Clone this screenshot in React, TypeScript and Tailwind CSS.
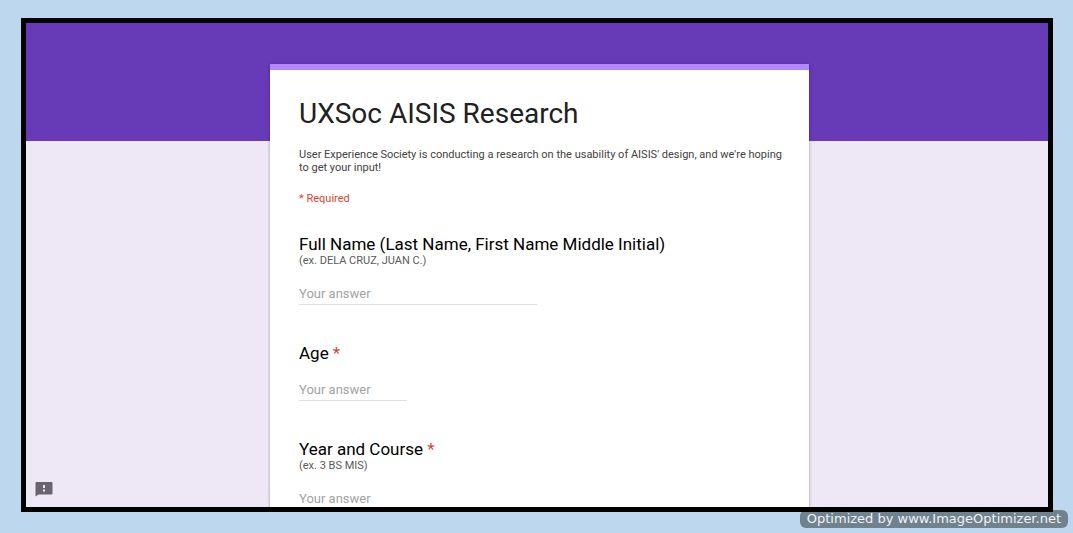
type QuestionProps = {
  id: string;
  title: string;
  hint?: string;
  required?: boolean;
  short?: boolean;
};

function Question({ id, title, hint, required, short }: QuestionProps) {
  return (
    <div className="mb-[38px] flex flex-col">
      <label htmlFor={id} className="text-[17px] leading-5 text-black">
        {title}
        {required && <span className="text-[#db4437]"> *</span>}
      </label>
      {hint && <p className="text-[11px] leading-[13px] text-[#5a5a5a]">{hint}</p>}
      <input
        id={id}
        type="text"
        required={required}
        placeholder="Your answer"
        className={`mt-[15px] h-[23px] border-b border-[#e0e0e0] bg-transparent text-[13px] leading-5 text-black outline-none placeholder:text-[#a3a3a3] ${
          short ? "w-[108px]" : "w-[238px]"
        }`}
      />
    </div>
  );
}

export default function App() {
  return (
    <div className="relative flex h-screen flex-col bg-[#bdd7ee] pt-[18px] pr-5 pb-[21px] pl-[21px] font-['Roboto',sans-serif]">
      <p className="absolute right-[5px] bottom-[5px] rounded-md bg-[#71828f] px-[7px] font-['DejaVu_Sans',sans-serif] text-[13px] leading-[18px] whitespace-nowrap text-[#eef3f7]">
        Optimized by www.ImageOptimizer.net
      </p>
      <main className="relative min-h-0 flex-1 overflow-hidden border-[5px] border-black bg-[#ede7f6]">
        <div className="h-[118px] bg-[#673ab7]" />
        <div className="-mt-[77px] flex justify-center pl-[5px]">
          <form className="w-full max-w-[539px] border-t-[6px] border-[#b388ff] bg-white pt-7 pr-5 pl-[29px] shadow-[0_1px_3px_rgba(0,0,0,0.35)]">
            <h1 className="text-[28px] leading-8 text-[#212121]">UXSoc AISIS Research</h1>
            <p className="mt-[18px] text-[11px] leading-[13px] text-[#424242]">
              User Experience Society is conducting a research on the usability of AISIS' design, and we're hoping to
              get your input!
            </p>
            <p className="mt-[17px] mb-[27px] text-[11px] leading-4 text-[#db4437]">* Required</p>
            <Question id="name" title="Full Name (Last Name, First Name Middle Initial)" hint="(ex. DELA CRUZ, JUAN C.)" />
            <Question id="age" title="Age" required short />
            <Question id="course" title="Year and Course" hint="(ex. 3 BS MIS)" required />
          </form>
        </div>
        <button
          type="button"
          aria-label="Report a problem"
          className="absolute bottom-[9px] left-2 flex h-[18px] w-[19px] items-center justify-center"
        >
          <svg viewBox="0 0 18 16" className="h-4 w-[18px]">
            <path d="M1.500 1h15a1 1 0 0 1 1 1v10.500a1 1 0 0 1-1 1H3.500L0.500 15.500V2a1 1 0 0 1 1-1z" fill="#68646f" />
            <path d="M8 4h2v3H8zM8 8.500h2v2H8z" fill="#ede7f6" />
          </svg>
        </button>
      </main>
    </div>
  );
}
